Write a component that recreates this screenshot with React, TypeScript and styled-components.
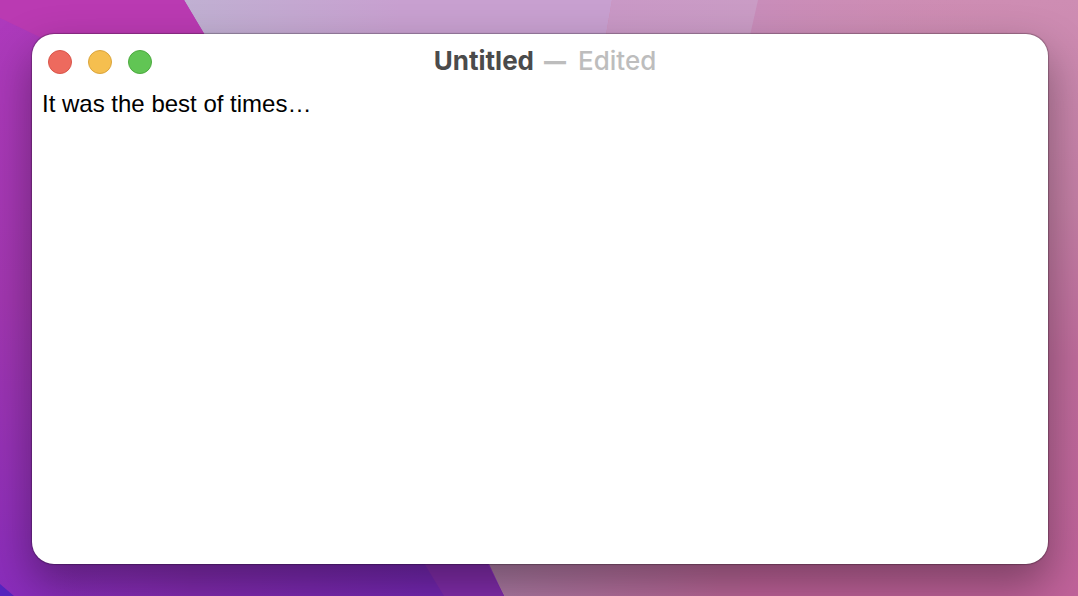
import React, { useState } from 'react';
import styled, { createGlobalStyle } from 'styled-components';

const GlobalStyle = createGlobalStyle`
  * { box-sizing: border-box; }
  body { margin: 0; background: #b95f93; }
`;

const Desktop = styled.main`
  position: relative;
  display: flex;
  min-height: 100vh;
  padding: 34px 30px 32px 32px;
  overflow: hidden;
`;

const WallpaperSvg = styled.svg`
  position: absolute;
  inset: 0;
  width: 100%;
  height: 100%;
`;

const Window = styled.section`
  position: relative;
  display: flex;
  flex: 1;
  flex-direction: column;
  border-radius: 22px;
  background: #fff;
  box-shadow:
    0 0 1px 1px rgba(0, 0, 0, 0.26),
    0 20px 44px 2px rgba(0, 0, 0, 0.34);
`;

const TitleBar = styled.header`
  display: grid;
  grid-template-columns: 1fr auto 1fr;
  align-items: center;
  height: 56px;
  padding: 0 6px 0 16px;
`;

const Controls = styled.div`
  display: flex;
  gap: 16px;
`;

const ControlButton = styled.button<{ $fill: string; $edge: string }>`
  width: 24px;
  height: 24px;
  padding: 0;
  border: 1px solid ${({ $edge }) => $edge};
  border-radius: 50%;
  background: ${({ $fill }) => $fill};
`;

const Title = styled.h1`
  display: flex;
  margin: 0;
  padding-bottom: 2px;
  color: #4b4b4b;
  font: 700 26px/32px Inter, 'Liberation Sans', sans-serif;
  white-space: nowrap;
`;

const Dash = styled.span`
  margin: 0 12px 0 10px;
  color: #bdbdbd;
  font-size: 22px;
  font-weight: 900;
`;

const Status = styled.span`
  color: #bdbdbd;
  font-weight: 500;
`;

const Editor = styled.textarea`
  flex: 1;
  width: 100%;
  padding: 0 10px 10px;
  border: 0;
  border-radius: 0 0 22px 22px;
  outline: 0;
  background: transparent;
  color: #000;
  font: 24px/28px 'Liberation Sans', Helvetica, Arial, sans-serif;
  resize: none;
`;

const controls = [
  { label: 'Close', fill: '#ed6a5e', edge: '#d9554a' },
  { label: 'Minimize', fill: '#f5bf4f', edge: '#dba53c' },
  { label: 'Zoom', fill: '#61c554', edge: '#4caa3f' },
];

function Wallpaper() {
  return (
    <WallpaperSvg viewBox="0 0 1078 596" preserveAspectRatio="none" aria-hidden="true">
      <defs>
        <linearGradient id="rose" x1="0" y1="0" x2="0" y2="1">
          <stop offset="0" stopColor="#ce8db3" />
          <stop offset="0.35" stopColor="#c47fa5" />
          <stop offset="0.6" stopColor="#bf6c9c" />
          <stop offset="1" stopColor="#c0629a" />
        </linearGradient>
        <linearGradient id="blush" x1="740" y1="0" x2="1000" y2="0" gradientUnits="userSpaceOnUse">
          <stop offset="0" stopColor="#c88dbb" />
          <stop offset="1" stopColor="#ce8db3" stopOpacity="0" />
        </linearGradient>
        <linearGradient id="lilac" x1="184" y1="0" x2="400" y2="0" gradientUnits="userSpaceOnUse">
          <stop offset="0" stopColor="#c0b0d2" />
          <stop offset="1" stopColor="#c8a0d0" />
        </linearGradient>
        <linearGradient id="orchid" x1="600" y1="0" x2="760" y2="0" gradientUnits="userSpaceOnUse">
          <stop offset="0" stopColor="#c998c6" />
          <stop offset="1" stopColor="#ca9cc5" />
        </linearGradient>
        <linearGradient id="dusk" x1="490" y1="0" x2="720" y2="0" gradientUnits="userSpaceOnUse">
          <stop offset="0" stopColor="#ae7ca5" />
          <stop offset="1" stopColor="#bb6799" />
        </linearGradient>
        <linearGradient id="violet" x1="0" y1="0" x2="0" y2="1">
          <stop offset="0" stopColor="#ae3abd" />
          <stop offset="0.5" stopColor="#a237b0" />
          <stop offset="1" stopColor="#8a2dbc" />
        </linearGradient>
        <linearGradient id="indigo" x1="30" y1="0" x2="430" y2="0" gradientUnits="userSpaceOnUse">
          <stop offset="0" stopColor="#8b2dbc" stopOpacity="0" />
          <stop offset="0.4" stopColor="#842bb2" />
          <stop offset="1" stopColor="#7627b4" />
        </linearGradient>
      </defs>
      <rect width="1078" height="596" fill="url(#rose)" />
      <path d="M756 0H1000V100H730Z" fill="url(#blush)" />
      <path d="M184 0H612L560 300H360Z" fill="url(#lilac)" />
      <path d="M612 0H758L690 300H560Z" fill="url(#orchid)" />
      <path d="M340 300H740V596H504Z" fill="url(#dusk)" />
      <path d="M0 0H184L246 104L489 564L504 596H0Z" fill="url(#violet)" />
      <path d="M0 0H184L246 104H180L0 18Z" fill="#ba3ab2" />
      <path d="M0 520H464L504 596H0Z" fill="url(#indigo)" />
      <path d="M404 530H469L504 596H444Z" fill="#842dae" />
      <path d="M0 584L14 596H0Z" fill="#5525c0" />
    </WallpaperSvg>
  );
}

export default function App() {
  const [text, setText] = useState('It was the best of times…');
  return (
    <>
      <GlobalStyle />
      <Desktop>
        <Wallpaper />
        <Window>
          <TitleBar>
            <Controls>
              {controls.map(({ label, fill, edge }) => (
                <ControlButton key={label} type="button" aria-label={label} $fill={fill} $edge={edge} />
              ))}
            </Controls>
            <Title>
              <span>Untitled</span>
              <Dash>—</Dash>
              <Status>Edited</Status>
            </Title>
          </TitleBar>
          <Editor
            aria-label="Document text"
            spellCheck={false}
            value={text}
            onChange={(event) => setText(event.target.value)}
          />
        </Window>
      </Desktop>
    </>
  );
}
